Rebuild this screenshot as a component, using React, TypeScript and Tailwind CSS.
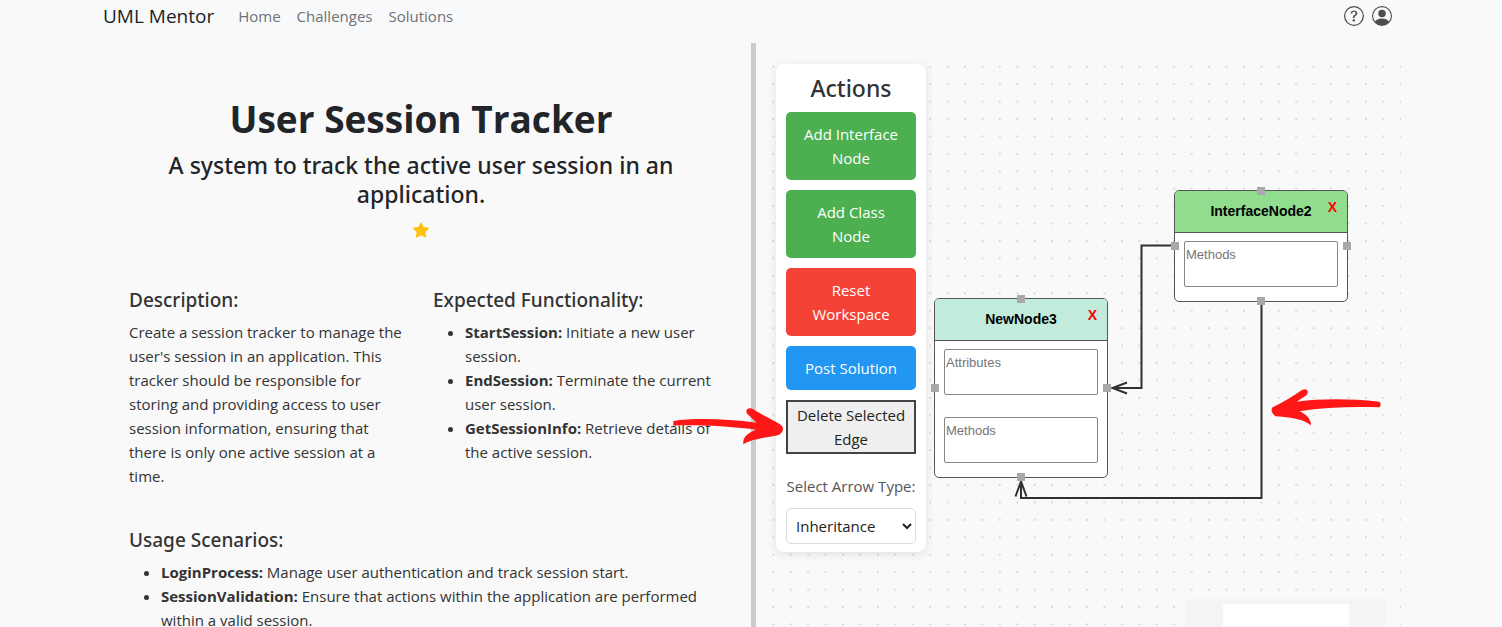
import React from "react";
import { BsPersonCircle, BsQuestionCircle, BsStarFill } from "react-icons/bs";

const functionality = [
  ["StartSession:", "Initiate a new user session."],
  ["EndSession:", "Terminate the current user session."],
  ["GetSessionInfo:", "Retrieve details of the active session."],
];

const scenarios = [
  ["LoginProcess:", "Manage user authentication and track session start."],
  [
    "SessionValidation:",
    "Ensure that actions within the application are performed within a valid session.",
  ],
];

function Navbar() {
  return (
    <nav className="h-[43px] shrink-0 bg-[#f8f9fb]">
      <div className="mx-auto flex h-8 w-full max-w-[1320px] items-center px-3">
        <a href="#" className="mr-6 text-[19px] text-[#1c1f23]">
          UML Mentor
        </a>
        <div className="flex grow gap-4 text-[15px] text-[#6f7173]">
          <a href="#home">Home</a>
          <a href="#challenges">Challenges</a>
          <a href="#solutions">Solutions</a>
        </div>
        <div className="mr-[7px] flex gap-2 text-[20px] text-[#4c4d4e]">
          <button type="button" aria-label="Help">
            <BsQuestionCircle />
          </button>
          <button type="button" aria-label="Account">
            <BsPersonCircle />
          </button>
        </div>
      </div>
    </nav>
  );
}

function TermList({ items }: { items: string[][] }) {
  return (
    <ul className="list-disc pl-8">
      {items.map(([term, text]) => (
        <li key={term}>
          <strong className="font-bold">{term}</strong> {text}
        </li>
      ))}
    </ul>
  );
}

const sectionTitle = "mb-2 font-['Noto_Sans','Open_Sans',sans-serif] text-[19px] leading-6 font-medium";

function Challenge() {
  return (
    <section className="w-1/2 shrink-0 px-[38px] pt-[52px] text-[15px] leading-6 text-[#333]">
      <header className="flex flex-col items-center text-center text-[#212529]">
        <h1 className="text-[37px] leading-[48px] font-bold">User Session Tracker</h1>
        <h2 className="mt-2 px-6 font-['Noto_Sans','Open_Sans',sans-serif] text-[23px] leading-[29px] font-medium">
          A system to track the active user session in an application.
        </h2>
        <BsStarFill className="mt-[13px] size-4 text-[#ffc107]" />
      </header>
      <div className="mt-[50px] grid grid-cols-2 gap-6">
        <div>
          <h3 className={sectionTitle}>Description:</h3>
          <p>
            Create a session tracker to manage the user's session in an application. This tracker
            should be responsible for storing and providing access to user session information,
            ensuring that there is only one active session at a time.
          </p>
        </div>
        <div>
          <h3 className={sectionTitle}>Expected Functionality:</h3>
          <TermList items={functionality} />
        </div>
      </div>
      <div className="mt-10">
        <h3 className={sectionTitle}>Usage Scenarios:</h3>
        <TermList items={scenarios} />
      </div>
    </section>
  );
}

function Palette() {
  return (
    <aside className="absolute top-[11px] left-[10px] flex w-[150px] flex-col gap-[10px] rounded-lg bg-white px-[10px] pt-[10px] pb-2 text-center text-[15px] leading-6 text-white shadow-[0_2px_10px_rgba(0,0,0,0.1)]">
      <h2 className="font-['Noto_Sans','Open_Sans',sans-serif] text-[23px] leading-7 font-medium text-[#333]">
        Actions
      </h2>
      <button type="button" className="rounded-[5px] bg-[#4caf50] p-[10px]">
        Add Interface Node
      </button>
      <button type="button" className="rounded-[5px] bg-[#4caf50] p-[10px]">
        Add Class <br />
        Node
      </button>
      <button type="button" className="rounded-[5px] bg-[#f44336] p-[10px]">
        Reset Workspace
      </button>
      <button type="button" className="rounded-[5px] bg-[#2196f3] p-[10px]">
        Post Solution
      </button>
      <button type="button" className="border-2 border-[#444] bg-[#efefef] py-px text-[#222]">
        Delete Selected Edge
      </button>
      <label htmlFor="arrow-type" className="mt-[10px] whitespace-nowrap text-[#555]">
        Select Arrow Type:
      </label>
      <select
        id="arrow-type"
        className="h-9 rounded-[5px] border border-[#ddd] bg-white px-[5px] text-[#222]"
      >
        <option>Inheritance</option>
        <option>Association</option>
        <option>Composition</option>
      </select>
    </aside>
  );
}

const handle = "absolute size-2 bg-[#a9a9a9]";

function UmlNode({
  name,
  fields,
  place,
  header,
}: {
  name: string;
  fields: string[];
  place: string;
  header: string;
}) {
  return (
    <div
      className={`absolute w-[174px] rounded-[5px] border border-[#555] bg-white font-['Liberation_Sans',Arial,sans-serif] text-[13px] ${place}`}
    >
      <div
        className={`relative flex h-[42px] items-center justify-center rounded-t-[4px] border-b border-[#555] text-[14px] font-bold text-black ${header}`}
      >
        {name}
        <button
          type="button"
          aria-label={`Remove ${name}`}
          className="absolute top-[6px] right-[10px] font-bold text-[#f00]"
        >
          X
        </button>
      </div>
      <div className="flex flex-col gap-[22px] px-[9px] pt-2 pb-[14px]">
        {fields.map((field) => (
          <textarea
            key={field}
            aria-label={field}
            placeholder={field}
            className="block h-[46px] w-full resize-none rounded-[2px] border border-[#858585] p-px pt-[5px] leading-4 placeholder:text-[#757575]"
          />
        ))}
      </div>
      <span className={`${handle} -top-1 left-[82px]`} />
      <span className={`${handle} -bottom-1 left-[82px]`} />
      <span className={`${handle} top-1/2 -left-1 -translate-y-1/2`} />
      <span className={`${handle} top-1/2 -right-1 -translate-y-1/2`} />
    </div>
  );
}

function Canvas() {
  return (
    <div className="relative min-h-[711px] w-full">
      <svg className="absolute inset-0 size-full" aria-hidden="true">
        <defs>
          <pattern id="dots" x="-1.4" y="5" width="17.43" height="17.43" patternUnits="userSpaceOnUse">
            <circle cx="8.7" cy="8.7" r="0.7" fill="#a8a8a8" />
          </pattern>
        </defs>
        <rect width="100%" height="100%" fill="url(#dots)" />
        <g fill="none" stroke="#303030" strokeWidth="2">
          <path d="M409 192.5H375.500V335H346M361 329.500L346.500 335L361 340.500" />
          <path d="M495.500 248V445H255V429M249.500 443.500L255 428.500L260.500 443.500" />
        </g>
      </svg>
      <Palette />
      <UmlNode
        name="NewNode3"
        fields={["Attributes", "Methods"]}
        place="top-[245px] left-[168px]"
        header="bg-[#c1ebdb]"
      />
      <UmlNode
        name="InterfaceNode2"
        fields={["Methods"]}
        place="top-[137px] left-[408px]"
        header="bg-[#90dd90]"
      />
      <div className="absolute right-[15px] bottom-[15px] h-[150px] w-[200px] bg-[#f4f4f4] px-[37px] py-[5px]">
        <div className="h-full bg-white" />
      </div>
      <svg
        className="pointer-events-none absolute top-[337px] left-[-106px] h-[70px] w-[140px]"
        viewBox="0 0 420 210"
        fill="#ff1717"
        aria-hidden="true"
      >
        <path d="M40 93C100 83 200 86 290 98L262 72C252 58 268 50 280 58C300 72 340 90 362 104C372 112 372 124 358 134C330 142 275 145 250 163C248 140 262 130 288 119C200 108 100 104 40 107Z" />
      </svg>
      <svg
        className="pointer-events-none absolute top-[317px] left-[484px] h-[140px] w-[150px]"
        viewBox="0 0 450 420"
        fill="#ff1717"
        aria-hidden="true"
      >
        <path d="M388 95C300 86 220 85 140 95L170 75C178 64 170 52 156 60C130 78 100 96 68 112C62 118 64 130 76 139C110 142 150 142 183 166C184 148 168 132 148 124C220 112 300 110 388 112C393 110 393 97 388 95Z" />
      </svg>
    </div>
  );
}

export default function App() {
  return (
    <div className="flex h-screen flex-col overflow-hidden bg-[#f9f9f9] font-['Open_Sans','Noto_Sans',sans-serif]">
      <Navbar />
      <main className="mx-auto flex min-h-0 w-full max-w-[1320px] grow">
        <Challenge />
        <div className="w-[5px] shrink-0 bg-[#ccc]" />
        <section className="min-w-0 grow p-[10px]">
          <Canvas />
        </section>
      </main>
    </div>
  );
}
